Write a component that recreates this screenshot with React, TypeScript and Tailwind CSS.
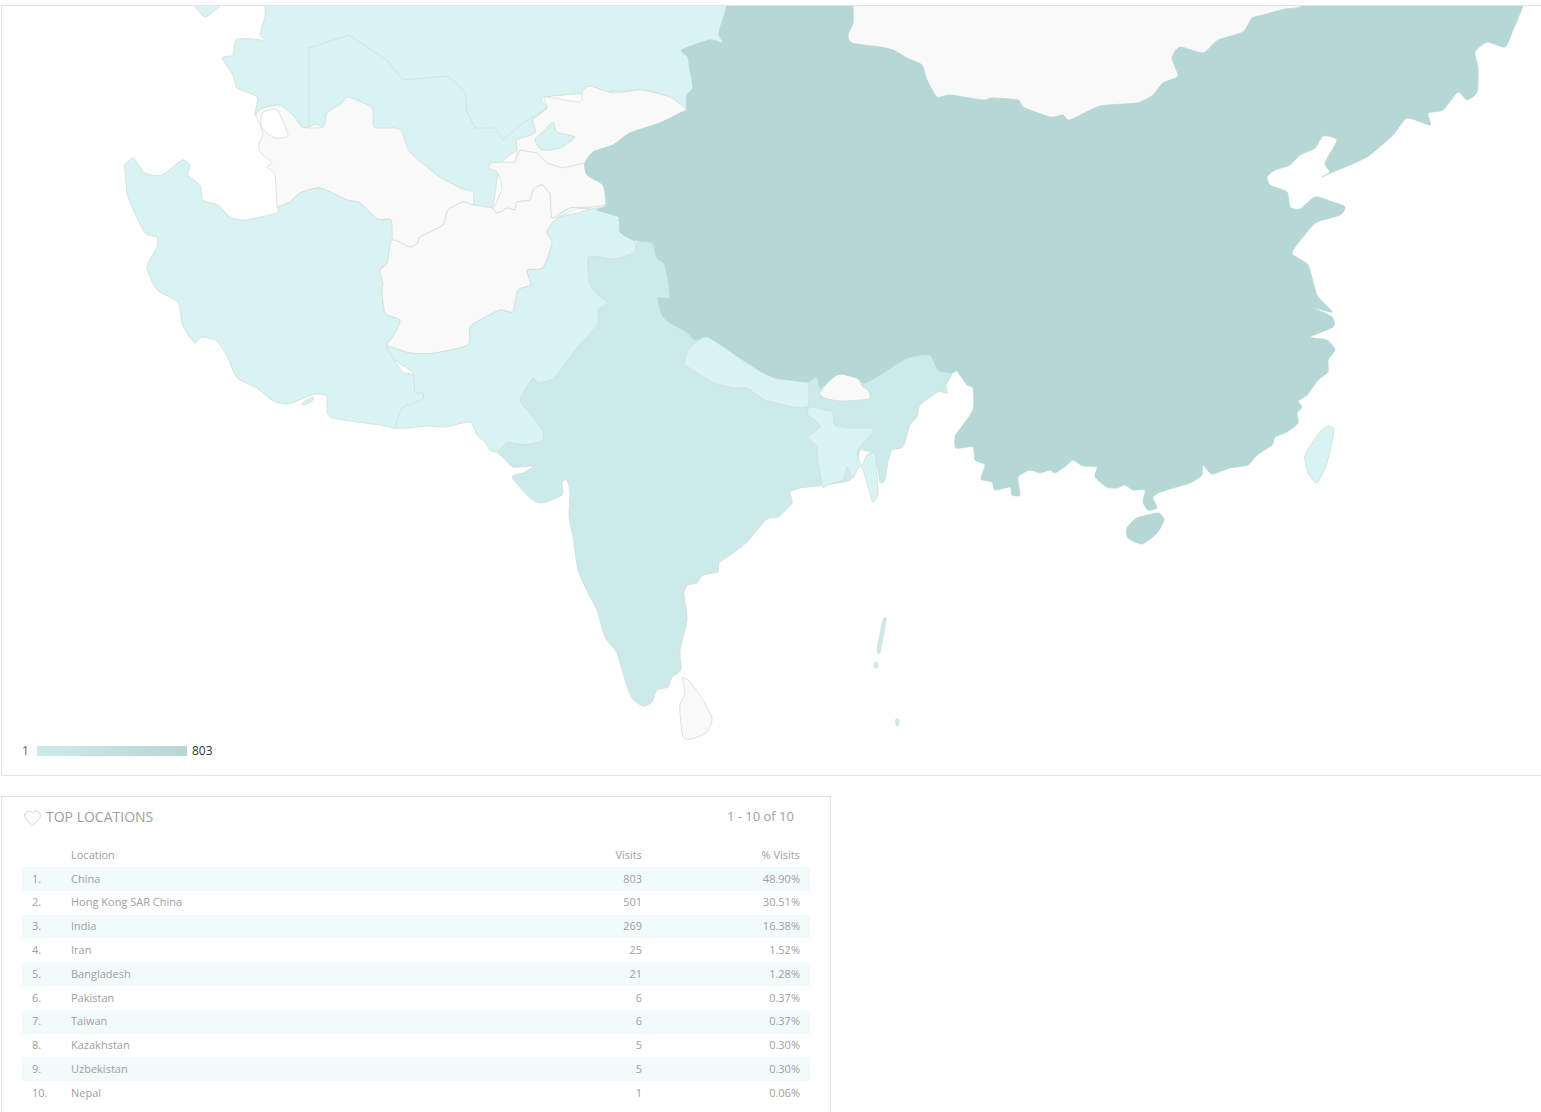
import { Heart } from "lucide-react";

const LIGHT = "#d9f3f3";
const INDIA = "#cdeaea";
const CHINA = "#b5d7d5";
const EMPTY = "#f9f9f9";

const ROWS = [
  ["China", "803", "48.90%"],
  ["Hong Kong SAR China", "501", "30.51%"],
  ["India", "269", "16.38%"],
  ["Iran", "25", "1.52%"],
  ["Bangladesh", "21", "1.28%"],
  ["Pakistan", "6", "0.37%"],
  ["Taiwan", "6", "0.37%"],
  ["Kazakhstan", "5", "0.30%"],
  ["Uzbekistan", "5", "0.30%"],
  ["Nepal", "1", "0.06%"],
];

// outlines traced from the picture, in page coordinates; later shapes sit on earlier ones
// points above y=6 run off the top of the map on purpose, the svg clips them
const SHAPES: { fill: string; stroke?: string; points: string }[] = [
  {
    fill: LIGHT,
    points: "190,-8 195,6 205,17 220,6 232,-8",
  },
  {
    // Kazakhstan + Uzbekistan
    fill: LIGHT,
    points:
      "265,-20 265,6 265,17 260,35 265,40 237,39 233,55 222,58 233,75 237,88 257,97 255,115 263,108 280,105 293,115 302,127 309,127 323,127 400,180 473,205 492,208 500,165 517,150 535,133 533,120 547,108 545,97 640,90 660,94 672,98 685,108 687,95 693,88 690,70 688,57 682,50 710,40 723,43 719,33 727,6 733,-20",
  },
  {
    // Kyrgyzstan + Tajikistan
    fill: EMPTY,
    points:
      "533,120 547,108 545,97 580,102 582,92 590,86 613,93 640,90 660,94 672,98 685,108 680,113 660,123 630,133 613,145 593,152 585,163 587,175 603,185 606,205 597,210 570,208 552,218 550,195 542,185 533,190 530,200 517,202 515,210 508,208 497,213 493,210 502,188 497,172 488,168 492,163 507,162 515,162 517,150 517,140 535,133",
  },
  {
    // Fergana valley
    fill: LIGHT,
    points: "535,140 545,130 553,122 557,132 575,137 560,148 542,150",
  },
  {
    // Turkmenistan
    fill: EMPTY,
    points:
      "256,115 263,108 280,105 293,115 302,127 323,127 327,113 342,103 348,97 372,108 374,127 395,128 402,132 410,152 437,175 460,188 473,192 473,205 463,202 448,210 443,225 420,237 418,243 410,247 392,240 391,220 377,219 360,203 347,200 320,188 300,193 290,202 278,207 277,205 275,175 267,167 272,163 262,154 259,150 259,143 263,133",
  },
  {
    // Kara-Bogaz
    fill: "#ffffff",
    points: "262,113 277,110 288,135 275,138 262,128",
  },
  {
    // Iran
    fill: LIGHT,
    points:
      "124,166 133,158 145,173 162,175 182,160 190,165 188,175 200,185 203,200 218,205 230,217 245,220 277,213 278,207 290,202 300,193 320,188 347,200 360,203 377,219 391,220 392,240 387,263 380,270 383,283 382,290 385,313 400,320 395,333 387,347 403,372 415,375 415,392 423,393 422,402 402,410 397,428 380,425 330,417 327,397 320,394 312,395 288,404 273,401 257,388 237,378 228,358 217,341 202,337 195,343 187,333 182,323 178,302 157,290 147,267 157,247 157,237 145,233 128,197 125,170",
  },
  { fill: LIGHT, points: "302,403 313,397 312,401 304,405" },
  {
    // Afghanistan
    fill: EMPTY,
    points:
      "463,202 448,210 443,225 420,237 418,243 410,247 392,240 387,263 380,270 383,283 382,290 385,313 400,320 395,333 387,347 410,353 435,353 468,345 470,327 480,320 500,310 513,312 518,290 531,285 527,270 543,268 552,243 547,232 557,218 580,208 597,210 605,205 593,207 570,208 552,218 550,195 542,185 533,190 530,200 517,202 515,210 508,208 497,213 492,208 473,205",
  },
  {
    // Pakistan
    fill: LIGHT,
    points:
      "600,208 577,213 557,218 547,232 552,243 543,268 527,270 531,285 518,290 513,312 500,310 480,320 470,327 468,345 435,353 410,353 387,346 395,360 413,373 415,392 423,393 422,400 402,408 397,428 427,426 445,427 470,422 477,435 485,442 490,450 498,452 507,443 525,445 543,440 560,400 620,300 640,250 633,240 618,220",
  },
  {
    // India
    fill: INDIA,
    points:
      "588,258 593,256 615,259 635,252 637,242 652,243 657,258 665,265 680,297 700,330 810,370 880,360 907,358 930,355 938,370 952,373 946,385 947,393 938,392 920,405 917,417 910,425 903,447 892,450 888,462 885,480 880,482 875,455 860,450 858,465 850,480 825,485 808,487 800,488 790,492 792,503 778,517 767,519 747,542 733,553 719,563 718,572 703,575 697,583 688,585 684,593 687,620 680,650 681,670 672,677 668,687 657,690 652,702 643,706 632,698 625,680 617,653 605,637 597,610 588,593 578,570 573,537 569,517 570,493 567,480 562,482 562,495 542,503 530,498 512,477 523,473 533,466 513,467 503,457 498,453 507,443 525,445 543,440 542,430 530,413 520,400 533,378 538,383 555,377 577,348 598,324 598,310 608,303 598,295 590,285 588,267",
  },
  { fill: INDIA, points: "883,620 886,620 880,652 877,650" },
  { fill: INDIA, points: "875,662 878,663 877,668 874,667" },
  { fill: INDIA, points: "896,719 899,720 898,726 896,725" },
  {
    // Nepal
    fill: LIGHT,
    points:
      "685,360 688,350 695,343 708,337 740,358 762,372 777,379 807,382 808,406 793,407 765,400 747,388 733,388 712,382 685,365",
  },
  {
    // Bhutan
    fill: EMPTY,
    points: "820,393 830,380 840,374 857,378 863,387 868,390 869,399 840,401 825,398",
  },
  {
    // Bangladesh
    fill: LIGHT,
    points:
      "808,408 813,407 825,410 833,412 835,425 853,428 873,428 872,433 860,447 857,455 862,465 867,455 875,455 878,493 873,502 868,487 862,467 857,470 853,478 847,467 843,480 827,485 823,487 818,463 817,447 808,437 820,427 815,420 808,415",
  },
  {
    // Sri Lanka
    fill: EMPTY,
    points:
      "682,678 688,680 700,695 712,718 707,732 692,739 683,737 680,713 680,705 685,692",
  },
  {
    // Taiwan
    fill: LIGHT,
    points: "1320,432 1328,426 1334,430 1327,463 1317,483 1308,473 1305,455",
  },
  {
    // China
    fill: CHINA,
    stroke: CHINA,
    points:
      "733,-20 727,6 719,33 723,43 710,40 682,50 688,57 690,70 693,88 687,95 686,110 680,113 660,123 630,133 613,145 593,152 585,163 587,175 603,185 606,205 597,210 618,217 620,232 633,240 652,243 657,258 665,265 670,297 658,298 663,317 677,327 687,332 695,340 708,337 740,358 762,372 777,378 807,382 817,377 820,388 830,380 840,374 857,378 865,383 883,373 907,358 930,355 938,370 952,373 957,371 967,385 973,388 973,410 957,433 955,437 956,448 973,447 975,460 985,465 981,479 992,482 995,490 1010,487 1012,495 1020,495 1018,477 1030,470 1040,473 1050,470 1055,473 1067,465 1073,460 1083,466 1097,467 1095,477 1107,487 1117,488 1125,485 1133,490 1145,490 1143,502 1148,510 1157,508 1153,498 1158,493 1173,488 1190,483 1202,475 1203,465 1212,474 1230,468 1248,465 1257,455 1272,445 1275,437 1287,432 1298,423 1297,413 1302,407 1298,401 1307,395 1318,380 1328,372 1328,360 1335,350 1327,340 1310,337 1333,327 1332,317 1312,307 1332,312 1317,295 1308,265 1292,253 1307,232 1317,222 1340,215 1345,207 1333,202 1315,197 1300,209 1290,207 1287,192 1270,185 1267,177 1275,170 1290,165 1300,155 1315,148 1323,136 1337,140 1325,163 1330,172 1322,177 1333,172 1367,157 1393,135 1407,118 1430,125 1428,113 1443,110 1458,92 1467,100 1477,92 1478,68 1475,52 1487,42 1505,47 1513,30 1523,6 1531,-20 1320,-20 1302,6 1285,9 1263,15 1252,18 1243,32 1218,40 1203,53 1180,47 1172,58 1178,76 1163,83 1153,95 1137,103 1100,106 1070,120 1063,115 1050,117 1023,107 1018,100 992,98 983,100 950,95 937,97 927,80 922,65 907,58 893,50 880,47 852,43 848,35 853,23 853,6 853,-20",
  },
  {
    // Hainan
    fill: CHINA,
    stroke: CHINA,
    points: "1127,528 1137,518 1158,513 1164,520 1157,533 1142,544 1128,538",
  },
];

// inner borders that the filled shapes do not draw by themselves
const LINES = [
  "309,127 309,48 349,35 387,60 403,80 448,76 465,92 467,112 475,128 495,128 503,140 520,125 547,108",
  "515,162 520,150 537,153 547,163 562,168 585,163",
];

// closed catmull-rom through the traced points, so coasts don't look like straight cuts
function smooth(points: string) {
  const p = points.split(" ").map((s) => s.split(",").map(Number));
  const n = p.length;
  let d = `M${p[0][0]},${p[0][1]}`;
  for (let i = 0; i < n; i++) {
    const [a, b, c, e] = [p[(i - 1 + n) % n], p[i], p[(i + 1) % n], p[(i + 2) % n]];
    const k = 0.1;
    d += `C${b[0] + (c[0] - a[0]) * k},${b[1] + (c[1] - a[1]) * k} ${c[0] - (e[0] - b[0]) * k},${c[1] - (e[1] - b[1]) * k} ${c[0]},${c[1]}`;
  }
  return d + "Z";
}

function RegionMap() {
  return (
    <svg viewBox="2 6 1539 769" className="block h-[769px] w-[1539px]">
      {/* Mongolia sits under China, so their shared edge comes from one outline */}
      <rect x={840} y={0} width={480} height={130} fill={EMPTY} />
      {SHAPES.map((s, i) => (
        <path
          key={i}
          d={smooth(s.points)}
          fill={s.fill}
          stroke={s.stroke ?? "#cfdcdc"}
          strokeWidth={0.8}
          strokeLinejoin="round"
        />
      ))}
      {LINES.map((l, i) => (
        <polyline key={i} points={l} fill="none" stroke="#cfdcdc" strokeWidth={0.8} />
      ))}
    </svg>
  );
}

export default function App() {
  return (
    <div className="h-[1112px] w-[1541px] overflow-hidden bg-white pt-[5px] pl-px font-['Open_Sans',sans-serif]">
      <div className="relative h-[771px] w-[1540px] overflow-hidden border-y border-l border-[#e3e3e3]">
        <RegionMap />
        <div className="absolute top-[737px] left-[20px] flex items-center text-xs leading-4 text-[#666]">
          <span className="w-[15px]">1</span>
          <span className="h-[10px] w-[150px] bg-gradient-to-r from-[#cdeaea] to-[#b5d7d5]" />
          <span className="ml-[5px] text-[#333]">803</span>
        </div>
      </div>

      <div className="mt-5 h-[400px] w-[830px] border border-[#e3e3e3] px-5">
        <div className="flex h-[40px] items-center">
          <Heart size={19} strokeWidth={0.9} className="mt-px ml-px text-[#c4c4c4]" />
          <h2 className="ml-1 text-sm text-[#a0a0a0]">TOP LOCATIONS</h2>
          <span className="mr-4 ml-auto text-[13px] text-[#a0a0a0]">1 - 10 of 10</span>
        </div>
        <table className="mt-[6px] w-[788px] table-fixed text-[11px] text-[#a0a0a0]">
          <thead>
            <tr className="h-[24px]">
              <th className="w-[49px]" />
              <th className="text-left font-normal">Location</th>
              <th className="w-[120px] text-right font-normal">Visits</th>
              <th className="w-[168px] pr-[10px] text-right font-normal">% Visits</th>
            </tr>
          </thead>
          <tbody>
            {ROWS.map((r, i) => (
              <tr key={r[0]} className={i % 2 === 0 ? "h-[23.8px] bg-[#f2fafb]" : "h-[23.8px]"}>
                <td className="pl-[10px]">{i + 1}.</td>
                <td>{r[0]}</td>
                <td className="text-right">{r[1]}</td>
                <td className="pr-[10px] text-right">{r[2]}</td>
              </tr>
            ))}
          </tbody>
        </table>
      </div>
    </div>
  );
}
